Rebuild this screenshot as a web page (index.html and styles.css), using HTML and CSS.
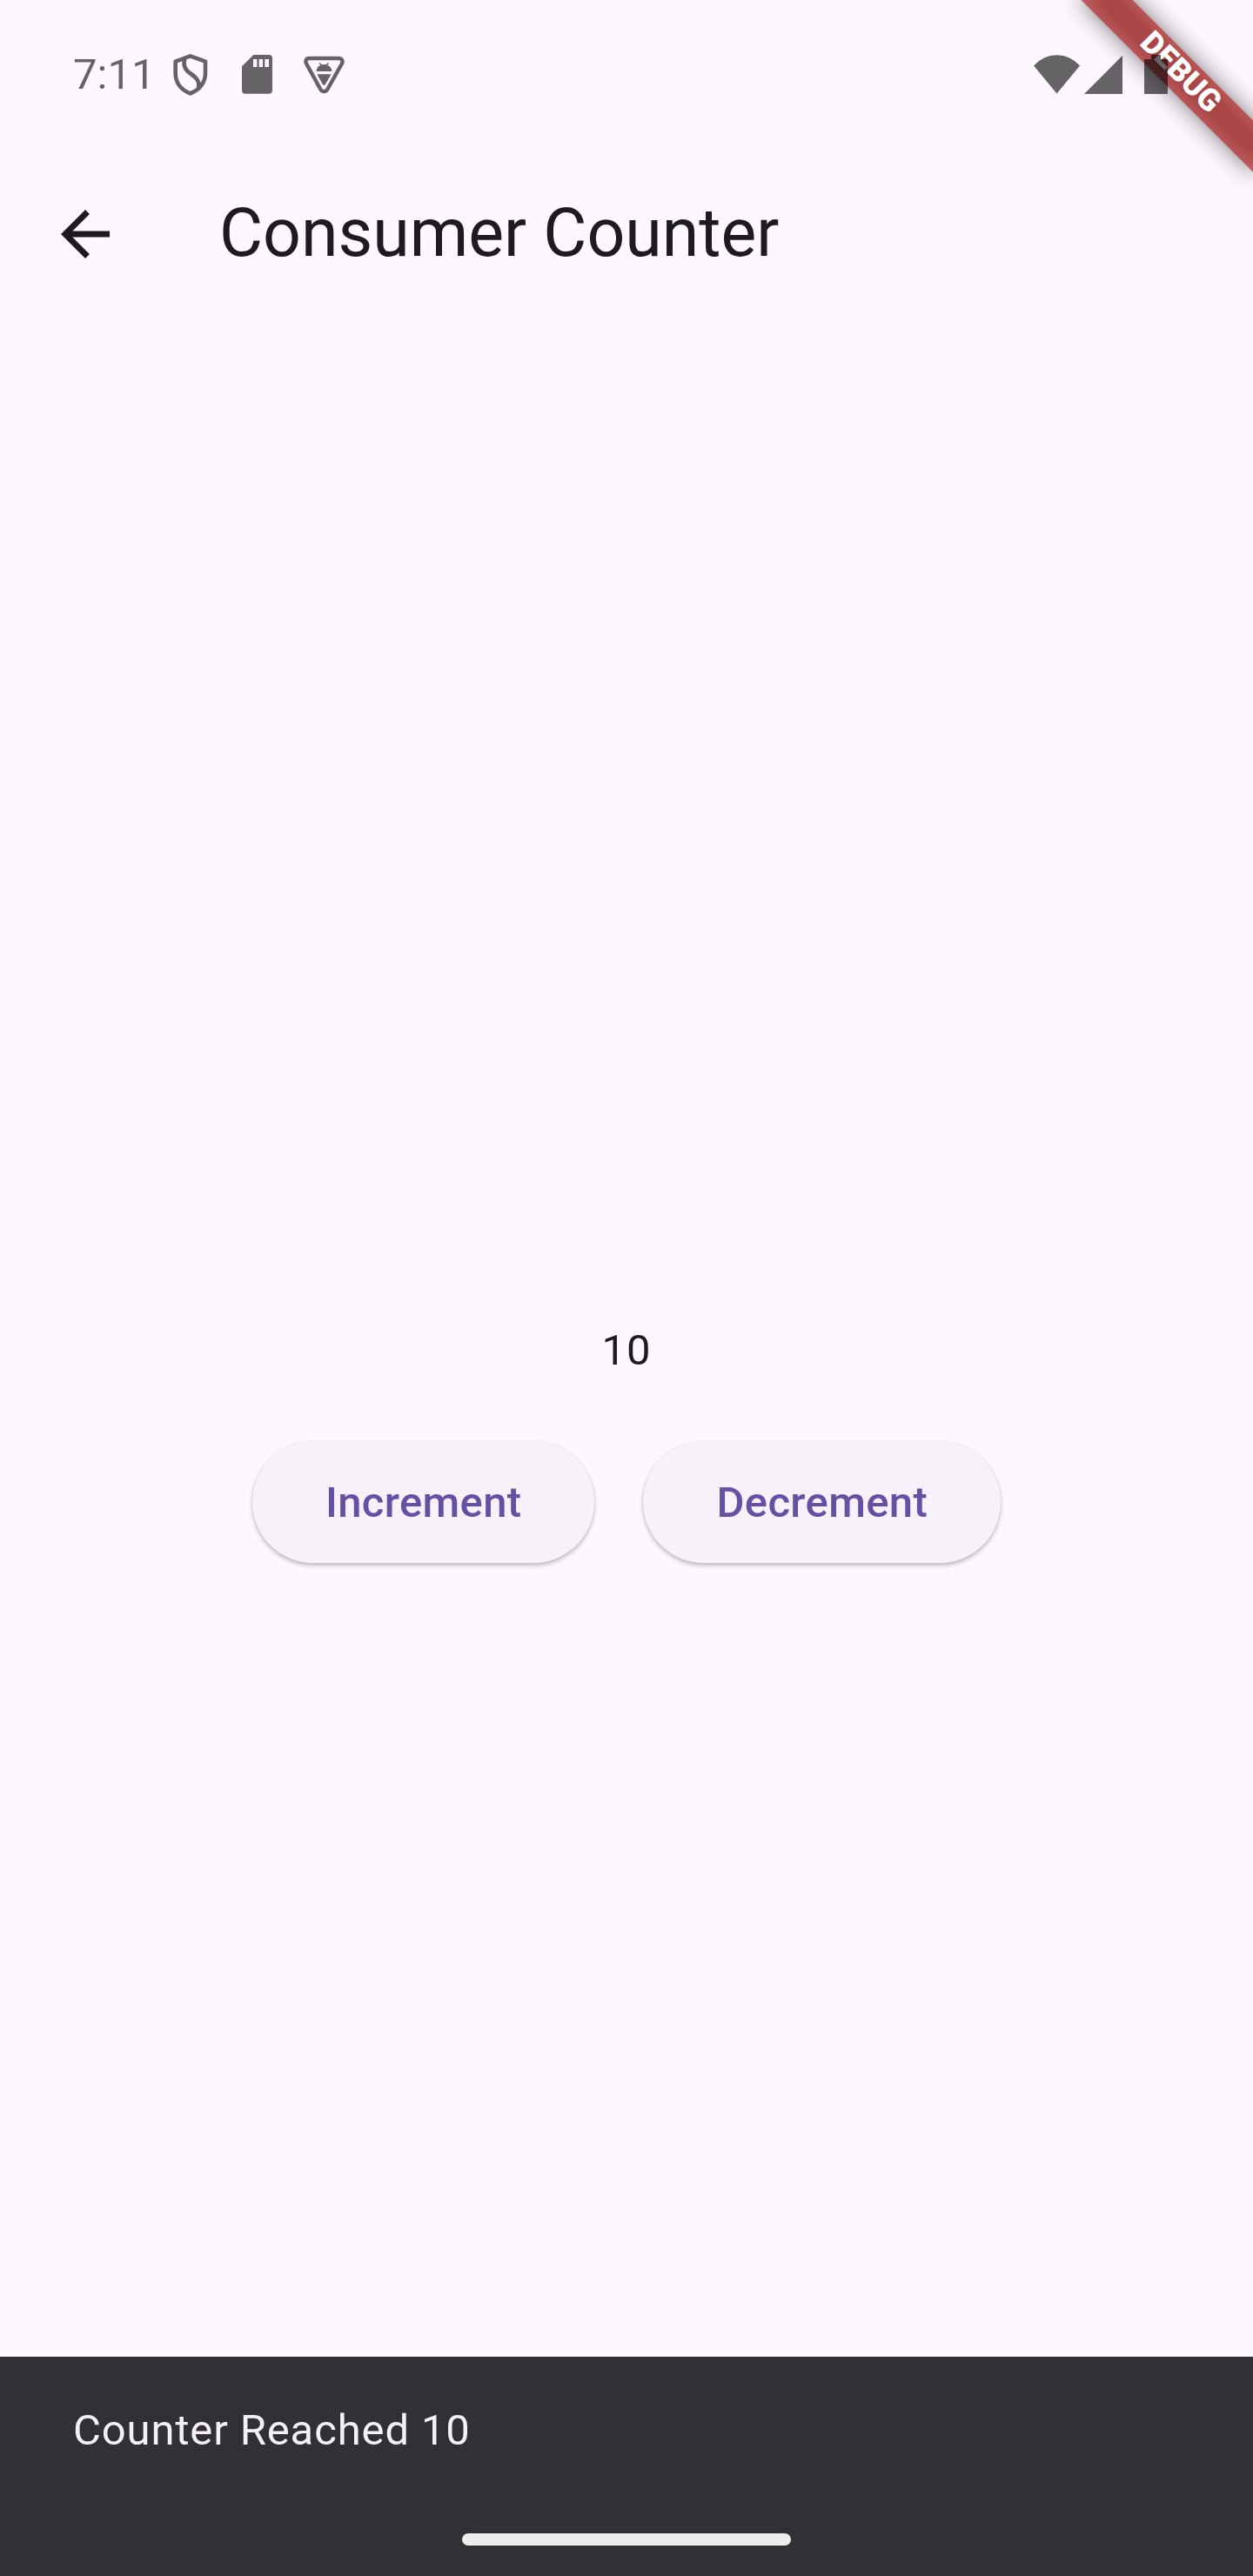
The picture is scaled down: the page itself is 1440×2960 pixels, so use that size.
FILE: index.html
```html
<!DOCTYPE html>
<html lang="en">
<head>
<meta charset="utf-8">
<title>Consumer Counter</title>
<link rel="stylesheet" href="styles.css">
</head>
<body>
<div class="screen">
  <div class="banner"><span class="banner-text">DEBUG</span></div>

  <div class="status-bar">
    <span class="clock">7:11</span>
    <div class="notifications">
      <svg width="42" height="52" viewBox="414 60 126 156" fill="none" stroke="currentColor" stroke-width="14" stroke-linejoin="round">
        <path d="M476 73L425 92V133C425 164 443 190 476 202C509 190 528 164 528 133V92ZM457 80C452 98 454 113 466 125C480 139 512 150 504 182"/>
      </svg>
      <svg width="39" height="52" viewBox="648 60 117 156" fill="currentColor">
        <path fill-rule="evenodd" d="M694 69H747Q759 69 759 81V191Q759 203 747 203H666Q654 203 654 191V109ZM693 84V111H706V84ZM713 84V111H726V84ZM733 84V111H747V84Z"/>
      </svg>
      <svg width="49" height="52" viewBox="864 60 147 156" fill="currentColor">
        <path d="M887 81H987C999 81 1004 91 998 101L949 188C943 198 931 198 925 188L877 101C871 91 875 81 887 81Z" fill="none" stroke="currentColor" stroke-width="13"/>
        <path d="M911 126C911 115 917 108 925 105L920 98L923 95L929 103Q937 101 945 103L951 95L954 98L949 105C958 108 964 115 964 126ZM913 136H962L942 170Q937 177 932 170Z"/>
      </svg>
    </div>
    <div class="system-icons">
      <svg width="54" height="46" viewBox="0 0 54 46" fill="currentColor"><path d="M0 12.5Q11 .2 26.5 .2T53 12.5L26.5 44.6Z"/></svg>
      <svg width="44" height="46" viewBox="0 0 44 46" fill="currentColor"><path d="M44 .8V45H0Z"/></svg>
      <svg class="battery" width="27" height="46" viewBox="0 0 27 46" fill="currentColor"><path d="M8 0H19V5H26Q27 5 27 6V44Q27 45 26 45H1Q0 45 0 44V6Q0 5 1 5H8Z"/></svg>
    </div>
  </div>

  <header class="app-bar">
    <svg class="back" width="84" height="84" viewBox="0 0 24 24" fill="currentColor"><path d="M20 11H7.83l5.59-5.59L12 4l-8 8 8 8 1.41-1.41L7.83 13H20z"/></svg>
    <h1 class="title">Consumer Counter</h1>
  </header>

  <main class="content">
    <div class="count">10</div>
    <div class="actions">
      <button class="button">Increment</button>
      <button class="button">Decrement</button>
    </div>
  </main>

  <footer class="snackbar">
    <div class="message">Counter Reached 10</div>
    <div class="handle"></div>
  </footer>
</div>
</body>
</html>
```
FILE: styles.css
```css
* { box-sizing: border-box; }

body {
  margin: 0;
  font-family: Roboto, sans-serif;
  background: #fef7ff;
  color: #1d1b20;
}

.screen {
  position: relative;
  display: flex;
  flex-direction: column;
  width: 1440px;
  height: 2960px;
  overflow: hidden;
}

svg { display: block; flex: none; }

.status-bar {
  position: relative;
  z-index: 2;
  display: flex;
  align-items: center;
  height: 171px;
  padding: 0 98px 0 84px;
  color: rgba(0, 0, 0, 0.6);
}

.clock {
  width: 114px;
  font-size: 49px;
  line-height: 58px;
}

.notifications {
  display: flex;
  gap: 33px;
}

.notifications svg:nth-child(2) { margin-left: 3px; }

.system-icons {
  display: flex;
  gap: 4px;
  margin-left: auto;
}

.battery { margin-left: 21px; }

/* Diagonal ribbon across the top right corner */
.banner {
  position: absolute;
  z-index: 1;
  top: 63px;
  left: 1216px;
  display: flex;
  align-items: center;
  justify-content: center;
  width: 280px;
  height: 42px;
  transform: rotate(45deg);
}

.banner::before,
.banner::after {
  content: "";
  position: absolute;
  inset: 0;
}

.banner::before {
  background: rgba(0, 0, 0, 0.5);
  filter: blur(13.9px);
}

.banner::after { background: rgba(183, 28, 28, 0.63); }

.banner-text {
  position: relative;
  z-index: 1;
  padding-bottom: 2px;
  font-size: 35.7px;
  font-weight: 900;
  line-height: 1;
  color: #fff;
}

.app-bar {
  display: flex;
  align-items: center;
  gap: 112px;
  height: 196px;
  padding-left: 56px;
}

.title {
  margin: -3px 0 0;
  font-size: 77px;
  font-weight: 400;
  line-height: 98px;
}

.content {
  flex: 1;
  display: flex;
  flex-direction: column;
  align-items: center;
  justify-content: center;
  gap: 69px;
  padding-top: 238px;
}

.count {
  font-size: 49px;
  line-height: 70px;
  letter-spacing: 0.875px;
}

.actions {
  display: flex;
  gap: 56px;
}

.button {
  height: 140px;
  padding: 2px 84px 0;
  border: 0;
  border-radius: 70px;
  background: #f7f2fa;
  box-shadow: 0 3px 5px rgba(0, 0, 0, 0.24), 0 0 3px rgba(0, 0, 0, 0.07);
  font: 500 49px/70px Roboto, sans-serif;
  letter-spacing: 0.35px;
  color: #6750a4;
}

.snackbar {
  display: flex;
  flex-direction: column;
  height: 252px;
  padding: 50px 84px 35px;
  background: #322f35;
}

.message {
  font-size: 49px;
  line-height: 70px;
  letter-spacing: 0.875px;
  color: #f5eff7;
}

.handle {
  align-self: center;
  width: 378px;
  height: 14px;
  margin-top: auto;
  border-radius: 7px;
  background: #eee;
}
```
